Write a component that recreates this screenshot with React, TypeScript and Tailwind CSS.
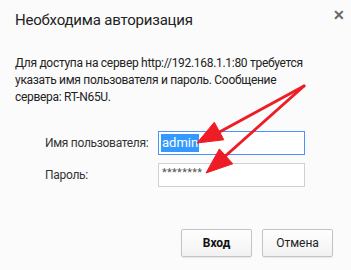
const Arrows = () => (
  <svg
    className="pointer-events-none absolute left-0 top-0"
    width={351}
    height={270}
    viewBox="0 0 351 270"
  >
    <g fill="#ee1c25" stroke="#ee1c25">
      <line x1={304} y1={86} x2={214} y2={135} strokeWidth={3} strokeLinecap="round" />
      <polygon points="197,143 223.8,139.8 214.3,122.2" strokeWidth={1} strokeLinejoin="round" />
      <line x1={304} y1={86} x2={222} y2={159} strokeWidth={3} strokeLinecap="round" />
      <polygon points="206,173 232.8,163.8 219.4,148.9" strokeWidth={1} strokeLinejoin="round" />
    </g>
  </svg>
);

export default function App() {
  return (
    <div
      className="relative h-[270px] w-[351px] overflow-hidden bg-[#fbfbfb] text-[#222]"
      style={{ fontFamily: "'Segoe UI', Roboto, 'Noto Sans', sans-serif" }}
    >
      {/* Header */}
      <div className="flex items-start justify-between pl-[15px] pr-[6px] pt-[10px]">
        <h1 className="text-[15px] font-normal leading-[20px] tracking-[-0.2px]">Необходима авторизация</h1>
        <span className="mt-[-5px] text-[14px] font-bold leading-[20px] text-[#666]">✕</span>
      </div>

      {/* Message */}
      <div className="mt-[25px] pl-[15px] text-[12px] leading-[17px] tracking-[-0.3px]">
        <div className="whitespace-nowrap">Для доступа на сервер http://192.168.1.1:80 требуется</div>
        <div className="whitespace-nowrap">указать имя пользователя и пароль. Сообщение</div>
        <div className="whitespace-nowrap">сервера: RT-N65U.</div>
      </div>

      {/* Form */}
      <div className="mt-[25px] grid grid-cols-[113px_147px] gap-y-[8px] pl-[45px] text-[12px] tracking-[-0.3px] text-[#333]">
        <label className="flex items-center whitespace-nowrap">Имя пользователя:</label>
        <div className="flex h-[24px] items-center border border-[#4d90fe] bg-white px-[2px]">
          <span className="bg-[#3399ff] px-[1px] text-[13px] leading-[18px] tracking-normal text-white">admin</span>
        </div>
        <label className="flex items-center whitespace-nowrap">Пароль:</label>
        <div className="flex h-[24px] items-start border border-[#d0d0d0] bg-white px-[3px] pt-[2px]">
          <span className="text-[11px] leading-[14px] tracking-[0.3px] text-[#555]">********</span>
        </div>
      </div>

      {/* Buttons */}
      <div className="mt-[42px] flex justify-end gap-[10px] pr-[18px]">
        <button className="h-[28px] w-[71px] rounded-[2px] border border-[#c4c4c4] bg-gradient-to-b from-[#fefefe] to-[#f2f2f2] text-[12px] font-bold text-[#111] shadow-[0_1px_1px_rgba(0,0,0,0.08)]">
          Вход
        </button>
        <button className="h-[28px] w-[71px] rounded-[2px] border border-[#c4c4c4] bg-gradient-to-b from-[#fefefe] to-[#f2f2f2] text-[12px] text-[#222] shadow-[0_1px_1px_rgba(0,0,0,0.08)]">
          Отмена
        </button>
      </div>

      <Arrows />
    </div>
  );
}
